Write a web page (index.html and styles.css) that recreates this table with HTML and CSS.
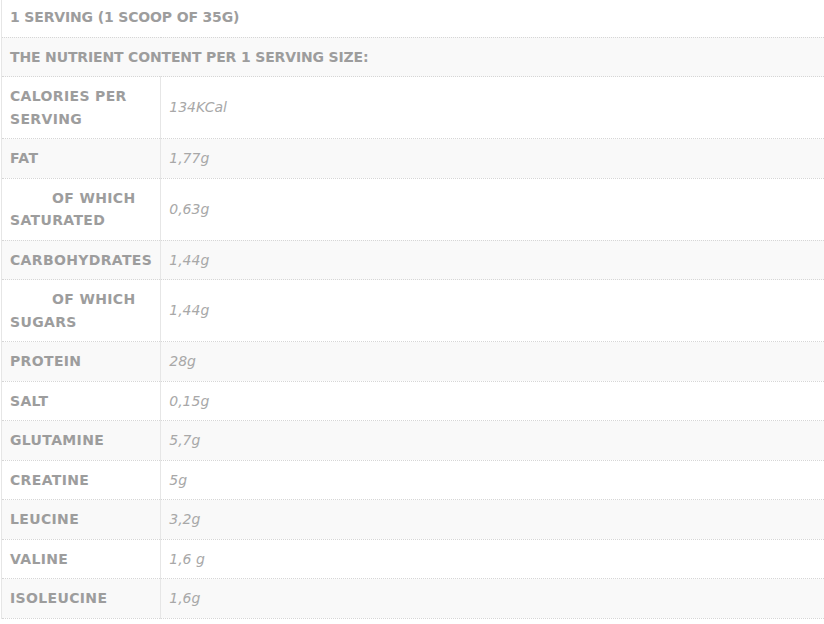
FILE: index.html
```html
<!DOCTYPE html>
<html>
<head>
<meta charset="utf-8">
<link rel="stylesheet" href="styles.css">
</head>
<body>
<div class="wrap">
<table class="nutri">
<tr class="odd"><th colspan="2" class="head">1 SERVING (1 SCOOP OF 35G)</th></tr>
<tr class="even"><th colspan="2" class="head">THE NUTRIENT CONTENT PER 1 SERVING SIZE:</th></tr>
<tr class="odd"><th class="lbl">CALORIES PER SERVING</th><td class="val">134KCal</td></tr>
<tr class="even"><th class="lbl">FAT</th><td class="val">1,77g</td></tr>
<tr class="odd"><th class="lbl"><span class="ind">OF WHICH</span> SATURATED</th><td class="val">0,63g</td></tr>
<tr class="even"><th class="lbl">CARBOHYDRATES</th><td class="val">1,44g</td></tr>
<tr class="odd"><th class="lbl"><span class="ind">OF WHICH</span> SUGARS</th><td class="val">1,44g</td></tr>
<tr class="even"><th class="lbl">PROTEIN</th><td class="val">28g</td></tr>
<tr class="odd"><th class="lbl">SALT</th><td class="val">0,15g</td></tr>
<tr class="even"><th class="lbl">GLUTAMINE</th><td class="val">5,7g</td></tr>
<tr class="odd"><th class="lbl">CREATINE</th><td class="val">5g</td></tr>
<tr class="even"><th class="lbl">LEUCINE</th><td class="val">3,2g</td></tr>
<tr class="odd"><th class="lbl">VALINE</th><td class="val">1,6 g</td></tr>
<tr class="even"><th class="lbl">ISOLEUCINE</th><td class="val">1,6g</td></tr>
</table>
</div>
</body>
</html>
```
FILE: styles.css
```css
html, body {
  margin: 0;
  padding: 0;
  background: #fff;
  overflow: hidden;
}
.wrap {
  padding-left: 1px;
  margin-top: -2px;
}
.nutri {
  border-collapse: collapse;
  width: 100%;
  font-family: "DejaVu Sans", sans-serif;
  font-size: 14px;
  line-height: 22.5px;
  border-left: 1px solid #e6e6e6;
}
.nutri tr {
  border-bottom: 1px dotted #d6d6d6;
}
.nutri tr.even {
  background: #f9f9f9;
}
.nutri th, .nutri td {
  padding: 8px 8px 8px 8px;
  text-align: left;
  vertical-align: middle;
}
.head, .lbl {
  font-weight: bold;
  color: #9d9d9d;
}
.head {
  letter-spacing: -0.15px;
}
.lbl {
  width: 142px;
  letter-spacing: 0.35px;
  border-right: 1px solid #e6e6e6;
}
.ind {
  padding-left: 42px;
}
.val {
  font-style: italic;
  color: #a8a8a8;
  font-weight: normal;
  letter-spacing: 0;
  padding-left: 9px;
}
```
